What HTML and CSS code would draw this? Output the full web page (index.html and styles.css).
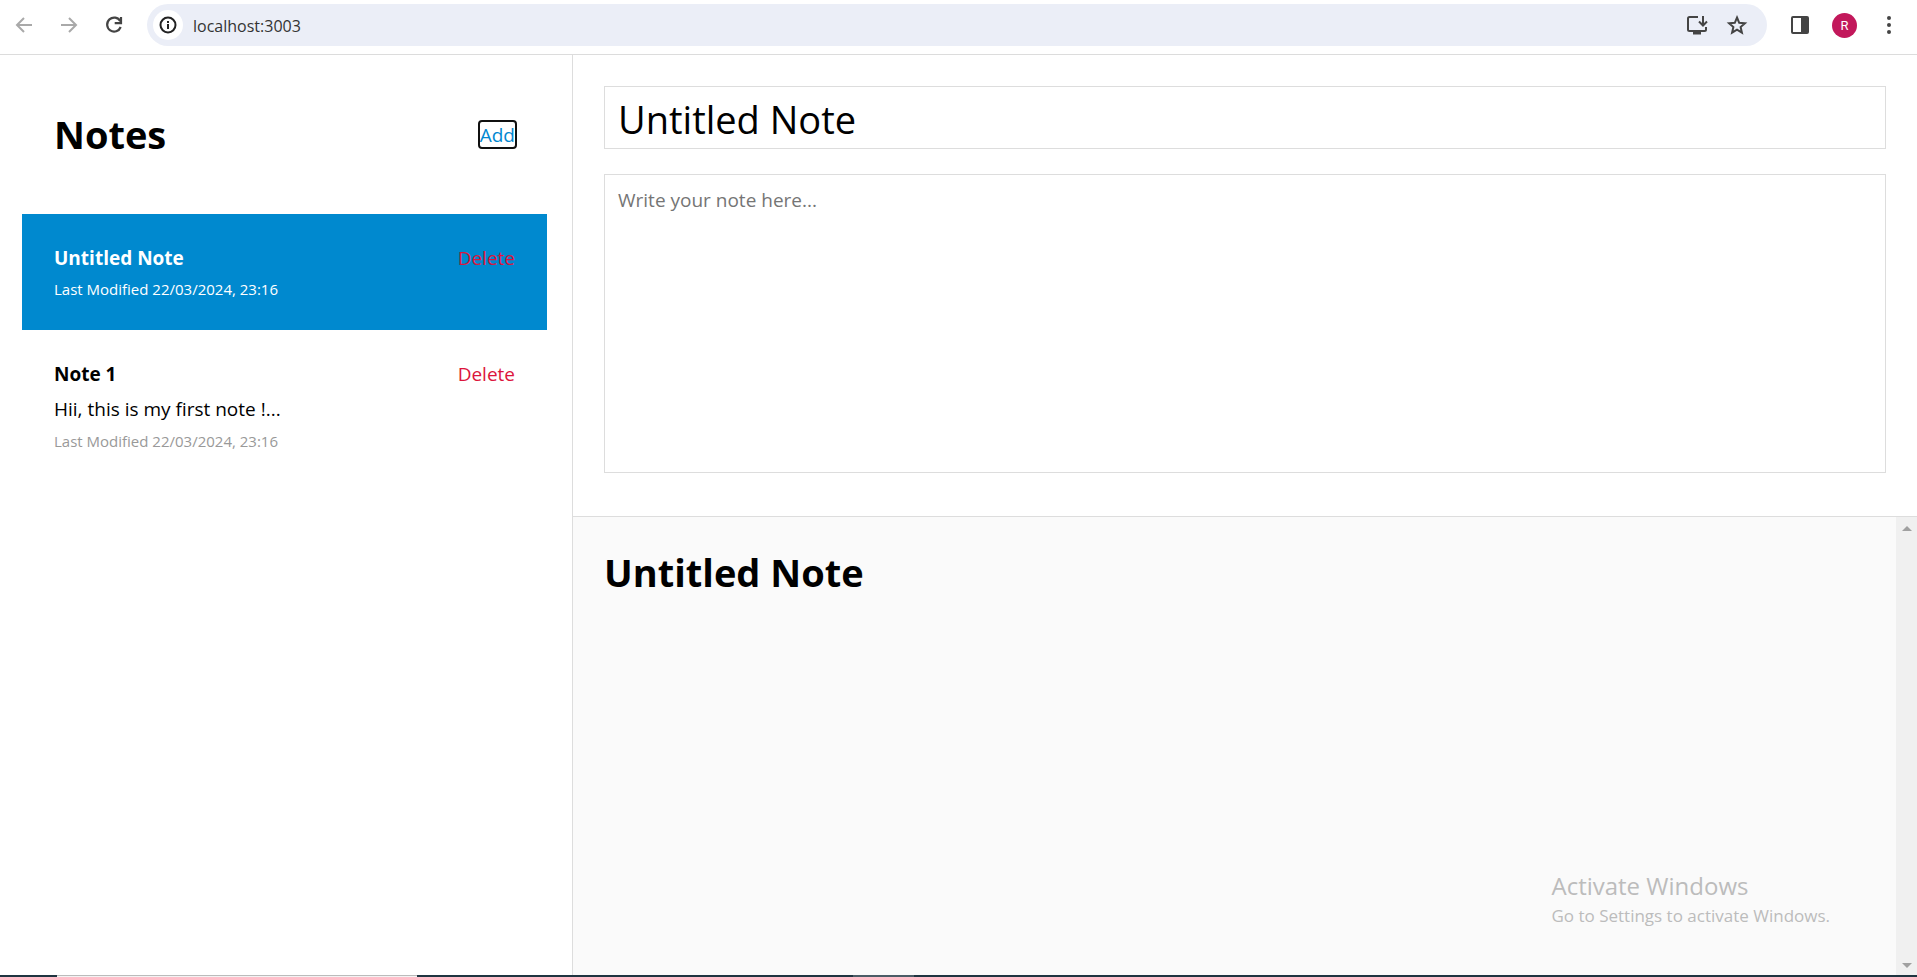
FILE: index.html
```html
<!DOCTYPE html>
<html lang="en">
<head>
<meta charset="utf-8">
<title>Notes</title>
<link rel="stylesheet" href="styles.css">
</head>
<body>
<div class="screen">
  <header class="toolbar">
    <nav class="nav">
      <button class="icon-btn muted" aria-label="Back"><svg width="24" height="24" viewBox="0 0 24 24" fill="none" stroke="currentColor" stroke-width="2"><path d="M20 12H5.500M12 5l-7 7 7 7"/></svg></button>
      <button class="icon-btn muted" aria-label="Forward"><svg width="24" height="24" viewBox="0 0 24 24" fill="none" stroke="currentColor" stroke-width="2"><path d="M4 12h14.500M12 5l7 7-7 7"/></svg></button>
      <button class="icon-btn" aria-label="Reload"><svg width="24" height="24" viewBox="0 0 24 24" fill="none" stroke="currentColor" stroke-width="2.200"><path d="M18.300 8.200A7 7 0 1 0 18.700 14"/><path d="M19 4v6.200h-6.300"/></svg></button>
    </nav>
    <div class="omnibox">
      <button class="site-info" aria-label="View site information"><svg width="20" height="20" viewBox="0 0 20 20" fill="none" stroke="currentColor" stroke-width="2"><circle cx="10" cy="10" r="7.500"/><path d="M10 9v5M10 6v2"/></svg></button>
      <input class="address" type="text" value="localhost:3003" aria-label="Address">
      <button class="icon-btn" aria-label="Install app"><svg width="24" height="24" viewBox="0 0 24 24" fill="none" stroke="currentColor" stroke-width="2"><path d="M13 4H4.500Q3 4 3 5.500v11Q3 18 4.500 18h15q1.500 0 1.500-1.500V14M18 3v9M14 8.500l4 4 4-4"/><path d="M8 20h8" stroke-width="3"/></svg></button>
      <button class="icon-btn" aria-label="Bookmark"><svg width="24" height="24" viewBox="0 0 24 24" fill="none" stroke="currentColor" stroke-width="2"><path d="M12 4.500l2.200 5.300 5.700.5-4.300 3.700 1.300 5.600-4.900-3-4.900 3 1.300-5.600-4.300-3.700 5.700-.5z"/></svg></button>
    </div>
    <div class="actions">
      <button class="icon-btn" aria-label="Side panel"><svg width="24" height="24" viewBox="0 0 24 24"><rect x="4" y="4" width="16" height="16" rx="1" fill="none" stroke="currentColor" stroke-width="2"/><path d="M13 4h7v16h-7z" fill="currentColor"/></svg></button>
      <button class="avatar" aria-label="Profile">R</button>
      <button class="icon-btn" aria-label="Menu"><svg width="24" height="24" viewBox="0 0 24 24" fill="currentColor"><circle cx="12" cy="5" r="2"/><circle cx="12" cy="12" r="2"/><circle cx="12" cy="19" r="2"/></svg></button>
    </div>
  </header>
  <div class="app">
    <aside class="sidebar">
      <div class="sidebar-head">
        <h1 class="heading">Notes</h1>
        <button class="text-btn add">Add</button>
      </div>
      <ul class="notes">
        <li class="note active">
          <div class="note-head"><strong class="note-title">Untitled Note</strong><button class="text-btn delete">Delete</button></div>
          <small class="note-meta">Last Modified 22/03/2024, 23:16</small>
        </li>
        <li class="note">
          <div class="note-head"><strong class="note-title">Note 1</strong><button class="text-btn delete">Delete</button></div>
          <p class="note-body">Hii, this is my first note !...</p>
          <small class="note-meta">Last Modified 22/03/2024, 23:16</small>
        </li>
      </ul>
    </aside>
    <main class="main">
      <section class="editor">
        <input class="title-input" type="text" value="Untitled Note" aria-label="Title">
        <textarea class="body-input" placeholder="Write your note here..." aria-label="Note"></textarea>
      </section>
      <section class="preview">
        <h1 class="heading preview-title">Untitled Note</h1>
        <div class="scrollbar" aria-hidden="true">
          <svg width="10" height="5" viewBox="0 0 10 5"><path d="M0 5L5 0l5 5z" fill="currentColor"/></svg>
          <svg width="10" height="5" viewBox="0 0 10 5"><path d="M0 0h10L5 5z" fill="currentColor"/></svg>
        </div>
      </section>
    </main>
  </div>
  <div class="taskbar"><span class="task-search"></span><span class="task-active"></span></div>
  <div class="watermark">
    <p class="watermark-title">Activate Windows</p>
    <p class="watermark-text">Go to Settings to activate Windows.</p>
  </div>
</div>
</body>
</html>
```
FILE: styles.css
```css
* { box-sizing: border-box; }
body { margin: 0; font-family: "Open Sans", "Noto Sans", sans-serif; font-size: 19px; color: #000; background: #fff; }
h1, p, ul { margin: 0; padding: 0; }
button { border: 0; padding: 0; background: none; font: inherit; color: inherit; }
input, textarea { font: inherit; color: inherit; border-radius: 0; outline: 0; }
svg { display: block; }

.screen { position: relative; display: flex; flex-direction: column; height: 100vh; overflow: hidden; }

.toolbar { display: flex; align-items: center; padding: 4px 16px 8px 12px; border-bottom: 1px solid #dcdcdc; color: #444; }
.nav { display: flex; gap: 21px; margin-right: 21px; }
.icon-btn { width: 24px; height: 24px; flex: none; }
.muted { color: #a9a9a9; }
.omnibox { flex: 1; display: flex; align-items: center; gap: 16px; height: 42px; padding: 0 18px 0 6px; border-radius: 21px; background: #ebeef7; }
.site-info { display: grid; place-items: center; width: 30px; height: 30px; border-radius: 50%; background: #fff; color: #222; margin-right: -6px; }
.address { flex: 1; min-width: 0; border: 0; padding: 1px 0 0; background: none; font-size: 16px; line-height: 24px; color: #333; }
.actions { display: flex; align-items: center; gap: 20px; margin-left: 21px; }
.avatar { width: 25px; height: 25px; border-radius: 50%; background: #c2185b; color: #fff; font-family: Roboto, sans-serif; font-size: 13px; }

.app { flex: 1; min-height: 0; display: grid; grid-template-columns: 573fr 1344fr; }
.sidebar { min-width: 0; padding: 0 25px 0 22px; border-right: 1px solid #ddd; }
.sidebar-head { display: flex; align-items: center; justify-content: space-between; padding: 52px 32px; }
.heading { font-size: 38px; line-height: 55px; font-weight: 700; }
.text-btn { line-height: 24px; }
.add { color: #0288d1; line-height: 24px; padding-top: 1px; outline: 2px solid #101010; border-radius: 2px; }
.notes { list-style: none; }
.note { display: flex; flex-direction: column; gap: 10px; padding: 32px; }
.note-head { display: flex; justify-content: space-between; line-height: 24px; }
.note-title { font-weight: 700; }
.note-body { line-height: 26px; }
.note-meta { font-size: 15px; line-height: 18px; color: #999; }
.delete { color: #dc143c; }
.active { background: #0089cf; color: #fff; }
.active .note-meta { color: #fff; }

.main { min-width: 0; display: grid; grid-template-rows: 461fr 459fr; }
.editor { display: flex; flex-direction: column; gap: 25px; padding: 31px 31px 43px; }
.title-input { width: 100%; height: 63px; padding: 5px 13px 3px; border: 1px solid #ddd; font-size: 38px; }
.body-input { flex: 1; width: 100%; padding: 12px 13px; border: 1px solid #ddd; line-height: 26px; resize: none; }
.body-input::placeholder { color: #757575; }
.preview { display: flex; justify-content: space-between; border-top: 1px solid #ddd; background: #fafafa; }
.preview-title { padding: 28px 31px; }
.scrollbar { display: flex; flex-direction: column; justify-content: space-between; align-items: center; width: 21px; padding: 9px 0 7px; background: #f0f0f0; color: #a0a0a0; }

.taskbar { display: flex; height: 2px; background: #1f3440; }
.task-search { width: 360px; margin-left: 57px; border-top: 1px solid #bbb; background: #f3f3f3; }
.task-active { width: 61px; margin-left: 436px; background: #4b5c66; }

.watermark { position: absolute; right: 87px; bottom: 47px; color: #bcbcbc; }
.watermark-title { font-size: 24px; line-height: 32px; }
.watermark-text { font-size: 17px; line-height: 28px; }
```
